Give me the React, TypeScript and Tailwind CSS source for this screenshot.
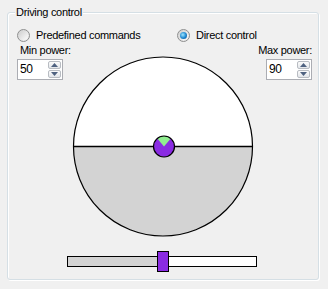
import React from "react";

const font = "font-['Liberation_Sans',Arial,sans-serif] text-[11px] leading-[13px] tracking-[-0.3px] text-black whitespace-nowrap";

function Radio({ checked }: { checked?: boolean }) {
  return (
    <span className="w-[13px] h-[13px] rounded-full border border-[#8e8f8f] bg-[linear-gradient(135deg,#d2d2d2,#f4f4f4)] flex items-center justify-center">
      <span className="w-[9px] h-[9px] rounded-full bg-[linear-gradient(135deg,#cfcfcf,#fdfdfd)] flex items-center justify-center">
        {checked && (
          <span className="w-[7px] h-[7px] rounded-full bg-[radial-gradient(circle_at_40%_40%,#9fe6ff,#1c86d0_55%,#0b4a86)]" />
        )}
      </span>
    </span>
  );
}

function Arrow({ up }: { up?: boolean }) {
  return (
    <svg width="7" height="4" viewBox="0 0 7 4">
      {up ? <path d="M0 4 L3.5 0 L7 4 Z" fill="#4f6280" /> : <path d="M0 0 L3.5 4 L7 0 Z" fill="#4f6280" />}
    </svg>
  );
}

function SpinBox({ value }: { value: string }) {
  return (
    <div className="w-[46px] h-[21px] bg-white border border-[#abadb3] flex items-stretch">
      <span className={`flex-1 pl-[2px] flex items-center ${font} text-[12px]`}>{value}</span>
      <div className="w-[14px] flex flex-col py-[1px] pr-[1px] gap-[1px]">
        <div className="flex-1 rounded-[2px] border border-[#b8bcc2] bg-[linear-gradient(#fbfbfb,#e3e6ea)] flex items-center justify-center">
          <Arrow up />
        </div>
        <div className="flex-1 rounded-[2px] border border-[#b8bcc2] bg-[linear-gradient(#fbfbfb,#e3e6ea)] flex items-center justify-center">
          <Arrow />
        </div>
      </div>
    </div>
  );
}

function Joystick() {
  const cx = 93;
  const cy = 92.5;
  const r = 10.5;
  const a = (40 * Math.PI) / 180;
  const lx = cx - r * Math.sin(a);
  const rx = cx + r * Math.sin(a);
  const ty = cy - r * Math.cos(a);
  return (
    <svg width="184" height="184" viewBox="0 0 184 184">
      <path d="M2.5 92.5 A89.5 89.5 0 0 1 181.5 92.5 Z" fill="#ffffff" />
      <path d="M2.5 92.5 A89.5 89.5 0 0 0 181.5 92.5 Z" fill="#d3d3d3" />
      <circle cx="92" cy="92.5" r="89.5" fill="none" stroke="#000" strokeWidth="1.2" />
      <line x1="2.5" y1="92.5" x2="181.5" y2="92.5" stroke="#000" strokeWidth="1.5" />
      <circle cx={cx} cy={cy} r={r} fill="#8a2be2" />
      <path d={`M${cx} ${cy} L${lx} ${ty} A${r} ${r} 0 0 1 ${rx} ${ty} Z`} fill="#90ee90" />
      <circle cx={cx} cy={cy} r={r} fill="none" stroke="#000" strokeWidth="1.2" />
    </svg>
  );
}

export default function App() {
  return (
    <div className="w-[328px] h-[289px] bg-[#f0f0f0] pt-[12px] pl-[7px] overflow-hidden">
      <div className="relative w-[312px] h-[268px] border border-[#d5dfe5] rounded-[3px] shadow-[inset_1px_1px_0_#ffffff,1px_1px_0_#ffffff]">
        <span className={`absolute left-[7px] top-[-7px] px-[1px] bg-[#f0f0f0] ${font}`}>Driving control</span>

        {/* Radios */}
        <div className="flex items-center pt-[16px] pl-[9px] h-[29px]">
          <div className="flex items-center gap-[6px] w-[160px]">
            <Radio />
            <span className={font}>Predefined commands</span>
          </div>
          <div className="flex items-center gap-[6px]">
            <Radio checked />
            <span className={font}>Direct control</span>
          </div>
        </div>

        {/* Power + joystick */}
        <div className="flex items-start pl-[9px] mt-[2px]">
          <div className="flex flex-col w-[47px] gap-[2px]">
            <span className={`${font} pl-[3px]`}>Min power:</span>
            <SpinBox value="50" />
          </div>
          <div className="ml-[7px] mt-[10px]">
            <Joystick />
          </div>
          <div className="flex flex-col items-end w-[57px] gap-[2px]">
            <span className={font}>Max power:</span>
            <SpinBox value="90" />
          </div>
        </div>

        {/* Slider */}
        <div className="relative ml-[59px] mt-[13px] w-[190px] h-[21px]">
          <div className="absolute left-0 right-0 top-[5px] h-[11px] border border-black bg-white flex">
            <div className="w-[90px] h-full bg-[#d3d3d3]" />
          </div>
          <div className="absolute left-[90px] top-0 w-[12px] h-[21px] border border-black bg-[#8a2be2]" />
        </div>
      </div>
    </div>
  );
}
